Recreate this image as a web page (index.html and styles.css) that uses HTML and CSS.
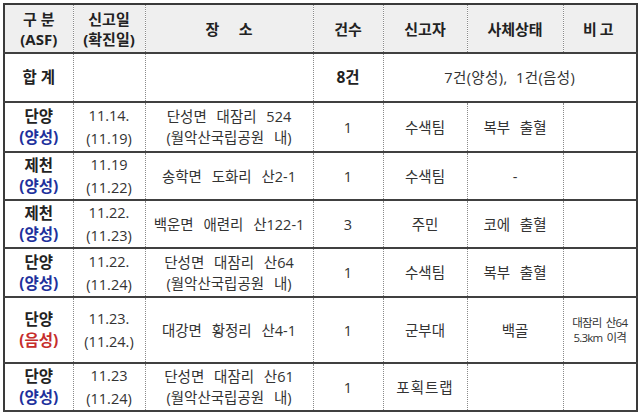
FILE: index.html
```html
<!DOCTYPE html>
<html lang="ko">
<head>
<meta charset="utf-8">
<link rel="stylesheet" href="styles.css">
</head>
<body>
<table class="tbl">
  <colgroup>
    <col class="c1"><col class="c2"><col class="c3"><col class="c4"><col class="c5"><col class="c6"><col class="c7">
  </colgroup>
  <thead>
    <tr class="head">
      <th>구 분<br>(ASF)</th>
      <th>신고일<br>(확진일)</th>
      <th class="wide">장&nbsp;&nbsp;&nbsp;&nbsp;&nbsp;소</th>
      <th>건수</th>
      <th>신고자</th>
      <th>사체상태</th>
      <th class="sp">비고</th>
    </tr>
  </thead>
  <tbody>
    <tr class="r-sum">
      <td class="b">합 계</td>
      <td></td>
      <td></td>
      <td class="b">8건</td>
      <td colspan="3" class="sum">7건(양성),&nbsp; 1건(음성)</td>
    </tr>
    <tr class="r50">
      <td class="b">단양<br><span class="pos">(양성)</span></td>
      <td class="dt">11.14.<br>(11.19)</td>
      <td class="pl">단성면 대잠리 524<br>(월악산국립공원 내)</td>
      <td>1</td>
      <td>수색팀</td>
      <td class="pl">복부 출혈</td>
      <td></td>
    </tr>
    <tr class="r48">
      <td class="b">제천<br><span class="pos">(양성)</span></td>
      <td class="dt">11.19<br>(11.22)</td>
      <td class="pl">송학면 도화리 산2-1</td>
      <td>1</td>
      <td>수색팀</td>
      <td>-</td>
      <td></td>
    </tr>
    <tr class="r48">
      <td class="b">제천<br><span class="pos">(양성)</span></td>
      <td class="dt">11.22.<br>(11.23)</td>
      <td class="pl">백운면 애련리 산122-1</td>
      <td>3</td>
      <td>주민</td>
      <td class="pl">코에 출혈</td>
      <td></td>
    </tr>
    <tr class="r49">
      <td class="b">단양<br><span class="pos">(양성)</span></td>
      <td class="dt">11.22.<br>(11.24)</td>
      <td class="pl">단성면 대잠리 산64<br>(월악산국립공원 내)</td>
      <td>1</td>
      <td>수색팀</td>
      <td class="pl">복부 출혈</td>
      <td></td>
    </tr>
    <tr class="r66">
      <td class="b">단양<br><span class="neg">(음성)</span></td>
      <td class="dt">11.23.<br>(11.24.)</td>
      <td class="pl">대강면 황정리 산4-1</td>
      <td>1</td>
      <td>군부대</td>
      <td>백골</td>
      <td class="note">대잠리 산64<br>5.3km 이격</td>
    </tr>
    <tr class="r47">
      <td class="b">단양<br><span class="pos">(양성)</span></td>
      <td class="dt">11.23<br>(11.24)</td>
      <td class="pl">단성면 대잠리 산61<br>(월악산국립공원 내)</td>
      <td>1</td>
      <td class="sp2">포획트랩</td>
      <td></td>
      <td></td>
    </tr>
  </tbody>
</table>
</body>
</html>
```

FILE: styles.css
```css
html, body {
  margin: 0;
  padding: 0;
  background: #ffffff;
}
body {
  padding: 3px 0 0 3px;
  font-family: "Open Sans", "Noto Sans CJK KR", sans-serif;
  color: #333333;
}
.tbl {
  border-collapse: collapse;
  table-layout: fixed;
  width: 633px;
  border: 2px solid #3a3a3a;
}
.c1 { width: 69px; }
.c2 { width: 72px; }
.c3 { width: 168px; }
.c4 { width: 70px; }
.c5 { width: 84px; }
.c6 { width: 96px; }
.c7 { width: 74px; }

.tbl th, .tbl td {
  padding: 0;
  text-align: center;
  vertical-align: middle;
  border-left: 1px dotted #8a8a8a;
  border-right: 1px dotted #8a8a8a;
  border-top: 2px solid #404040;
  border-bottom: 2px solid #404040;
  font-size: 14.5px;
  line-height: 21px;
  white-space: nowrap;
  overflow: hidden;
}
.tbl th:first-child, .tbl td:first-child { border-left: 2px solid #3a3a3a; }
.tbl th:last-child, .tbl td:last-child { border-right: 2px solid #3a3a3a; }

.head { height: 49px; background: #efefef; }
.head th {
  font-size: 15px;
  font-weight: bold;
  color: #222222;
  line-height: 20px;
  border-top: 2px solid #3a3a3a;
}
.head th.sp { letter-spacing: 3px; }

.r-sum { height: 49px; }
.r50 { height: 50px; }
.r48 { height: 48px; }
.r49 { height: 49px; }
.r66 { height: 66px; }
.r47 { height: 47px; }

.tbl td.b { font-weight: bold; font-size: 15.5px; color: #222222; }
.tbl td.dt { line-height: 23px; }
.pl { word-spacing: 6px; }
.sum { letter-spacing: 0.4px; }
.pos { color: #20309c; }
.neg { color: #c62d2b; }
.tbl td.note { font-size: 11.5px; line-height: 15px; letter-spacing: -0.8px; word-spacing: 2px; }
.sp2 { letter-spacing: 1px; }
```
